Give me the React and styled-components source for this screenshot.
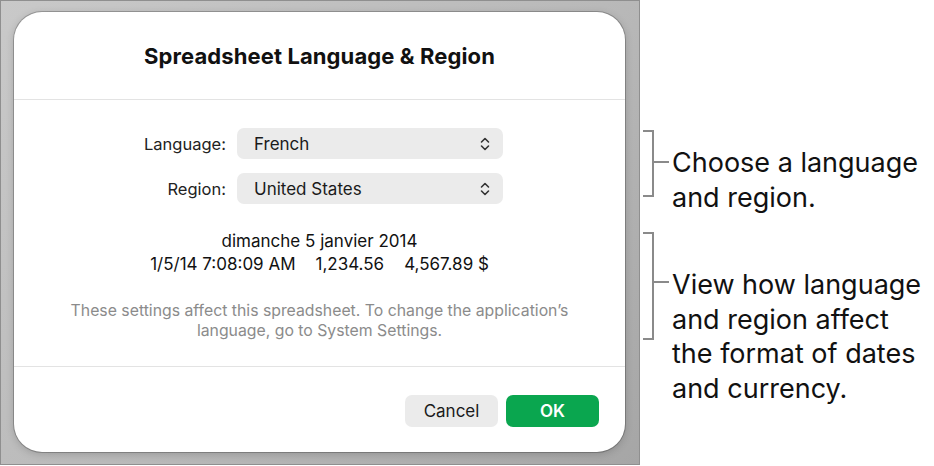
import styled, { createGlobalStyle } from "styled-components";

const GlobalStyle = createGlobalStyle`
    html, body {
        margin: 0;
        padding: 0;
        background: #ffffff;
    }
    body {
        font-family: Inter, "Noto Sans", "Liberation Sans", sans-serif;
        color: #1d1d1f;
        -webkit-font-smoothing: antialiased;
    }
`;

const Page = styled.div`
    display: flex;
    width: 934px;
    height: 466px;
    overflow: hidden;
`;

const Backdrop = styled.div`
    box-sizing: border-box;
    width: 640px;
    height: 465px;
    flex: 0 0 640px;
    padding: 11px 13px;
    border: 1px solid #8f8f8f;
    background: linear-gradient(135deg, #c9c9c9 0%, #b9b9b9 55%, #a6a6a6 100%);
`;

const Dialog = styled.section`
    display: flex;
    flex-direction: column;
    width: 611px;
    height: 440px;
    background: #ffffff;
    border-radius: 28px;
    box-shadow: 0 0 0 1px rgba(0, 0, 0, 0.22), 0 2px 8px rgba(0, 0, 0, 0.18);
    overflow: hidden;
`;

const Header = styled.header`
    height: 87px;
    display: flex;
    align-items: center;
    justify-content: center;
    border-bottom: 1px solid #e3e3e3;
    h1 {
        margin: 0;
        font-size: 22px;
        font-weight: 700;
        color: #111;
        letter-spacing: 0.1px;
    }
`;

const Body = styled.div`
    flex: 1;
    padding: 28px 0 25px;
    border-bottom: 1px solid #e3e3e3;
`;

const Form = styled.div`
    display: grid;
    grid-template-columns: 212px 266px;
    column-gap: 11px;
    row-gap: 14px;
    align-items: center;
`;

const Label = styled.label`
    text-align: right;
    font-size: 16.5px;
    color: #222;
`;

const Popup = styled.div`
    display: flex;
    align-items: center;
    justify-content: space-between;
    height: 31px;
    padding: 0 13px 0 17px;
    border-radius: 7px;
    background: #ebebeb;
    font-size: 17px;
    color: #1a1a1a;
    svg {
        flex: none;
    }
`;

const Preview = styled.div`
    margin-top: 26px;
    text-align: center;
    font-size: 17px;
    line-height: 23px;
    color: #111;
`;

const Values = styled.div`
    display: flex;
    justify-content: center;
    gap: 20px;
`;

const Note = styled.p`
    margin: 25px 0 0;
    text-align: center;
    font-size: 15.8px;
    line-height: 20px;
    color: #8b8b8b;
`;

const Footer = styled.footer`
    display: flex;
    justify-content: flex-end;
    gap: 8px;
    padding: 28px 26px 25px;
`;

const Button = styled.button`
    width: 93px;
    height: 32px;
    border: none;
    border-radius: 7px;
    font-family: inherit;
    font-size: 17px;
    font-weight: ${(props) => (props.primary ? 600 : 400)};
    color: ${(props) => (props.primary ? "#ffffff" : "#1a1a1a")};
    background: ${(props) => (props.primary ? "#0aa64f" : "#ebebeb")};
`;

const Callouts = styled.aside`
    display: flex;
    flex-direction: column;
    padding: 130px 0 0 3px;
`;

const Callout = styled.div`
    display: flex;
    align-items: flex-start;
    margin-top: ${(props) => props.gap || 0}px;
`;

const CalloutText = styled.p`
    margin: 0;
    padding-top: ${(props) => props.offset}px;
    font-size: 27px;
    line-height: 34.5px;
    color: #111;
    white-space: nowrap;
`;

function Chevrons() {
    return (
        <svg width="10" height="14" viewBox="0 0 10 14" fill="none">
            <path d="M1.5 5 L5 1.5 L8.5 5" stroke="#333" strokeWidth="1.6" strokeLinecap="round" strokeLinejoin="round" />
            <path d="M1.5 9 L5 12.5 L8.5 9" stroke="#333" strokeWidth="1.6" strokeLinecap="round" strokeLinejoin="round" />
        </svg>
    );
}

function Bracket({ height, tick }) {
    return (
        <svg width="29" height={height} viewBox={`0 0 29 ${height}`} fill="none">
            <path
                d={`M0 1 H10 V${height - 1} H0 M10 ${tick} H26`}
                stroke="#8a8a8a"
                strokeWidth="2"
            />
        </svg>
    );
}

export default function App() {
    return (
        <Page>
            <GlobalStyle />
            <Backdrop>
                <Dialog>
                    <Header>
                        <h1>Spreadsheet Language &amp; Region</h1>
                    </Header>
                    <Body>
                        <Form>
                            <Label>Language:</Label>
                            <Popup>
                                <span>French</span>
                                <Chevrons />
                            </Popup>
                            <Label>Region:</Label>
                            <Popup>
                                <span>United States</span>
                                <Chevrons />
                            </Popup>
                        </Form>
                        <Preview>
                            <div>dimanche 5 janvier 2014</div>
                            <Values>
                                <span>1/5/14 7:08:09 AM</span>
                                <span>1,234.56</span>
                                <span>4,567.89 $</span>
                            </Values>
                        </Preview>
                        <Note>
                            These settings affect this spreadsheet. To change the application’s
                            <br />
                            language, go to System Settings.
                        </Note>
                    </Body>
                    <Footer>
                        <Button>Cancel</Button>
                        <Button primary>OK</Button>
                    </Footer>
                </Dialog>
            </Backdrop>
            <Callouts>
                <Callout>
                    <Bracket height={67} tick={32} />
                    <CalloutText offset={16}>
                        Choose a language
                        <br />
                        and region.
                    </CalloutText>
                </Callout>
                <Callout gap={17}>
                    <Bracket height={108} tick={50} />
                    <CalloutText offset={36}>
                        View how language
                        <br />
                        and region affect
                        <br />
                        the format of dates
                        <br />
                        and currency.
                    </CalloutText>
                </Callout>
            </Callouts>
        </Page>
    );
}
